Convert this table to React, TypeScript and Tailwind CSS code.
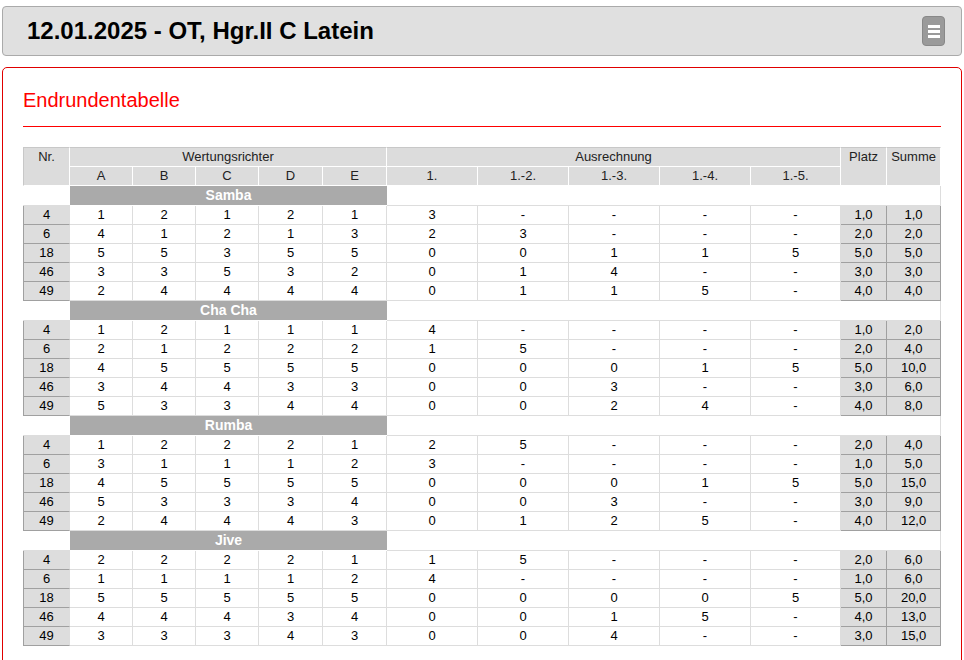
import { Fragment } from "react"

type Row = { nr: string; judges: string[]; calc: string[]; platz: string; summe: string }
type Dance = { name: string; rows: Row[] }

const r = (nr: string, j: string, c: string, platz: string, summe: string): Row => ({
  nr,
  judges: j.split(" "),
  calc: c.split(" "),
  platz,
  summe,
})

const dances: Dance[] = [
  {
    name: "Samba",
    rows: [
      r("4", "1 2 1 2 1", "3 - - - -", "1,0", "1,0"),
      r("6", "4 1 2 1 3", "2 3 - - -", "2,0", "2,0"),
      r("18", "5 5 3 5 5", "0 0 1 1 5", "5,0", "5,0"),
      r("46", "3 3 5 3 2", "0 1 4 - -", "3,0", "3,0"),
      r("49", "2 4 4 4 4", "0 1 1 5 -", "4,0", "4,0"),
    ],
  },
  {
    name: "Cha Cha",
    rows: [
      r("4", "1 2 1 1 1", "4 - - - -", "1,0", "2,0"),
      r("6", "2 1 2 2 2", "1 5 - - -", "2,0", "4,0"),
      r("18", "4 5 5 5 5", "0 0 0 1 5", "5,0", "10,0"),
      r("46", "3 4 4 3 3", "0 0 3 - -", "3,0", "6,0"),
      r("49", "5 3 3 4 4", "0 0 2 4 -", "4,0", "8,0"),
    ],
  },
  {
    name: "Rumba",
    rows: [
      r("4", "1 2 2 2 1", "2 5 - - -", "2,0", "4,0"),
      r("6", "3 1 1 1 2", "3 - - - -", "1,0", "5,0"),
      r("18", "4 5 5 5 5", "0 0 0 1 5", "5,0", "15,0"),
      r("46", "5 3 3 3 4", "0 0 3 - -", "3,0", "9,0"),
      r("49", "2 4 4 4 3", "0 1 2 5 -", "4,0", "12,0"),
    ],
  },
  {
    name: "Jive",
    rows: [
      r("4", "2 2 2 2 1", "1 5 - - -", "2,0", "6,0"),
      r("6", "1 1 1 1 2", "4 - - - -", "1,0", "6,0"),
      r("18", "5 5 5 5 5", "0 0 0 0 5", "5,0", "20,0"),
      r("46", "4 4 4 3 4", "0 0 1 5 -", "4,0", "13,0"),
      r("49", "3 3 3 4 3", "0 0 4 - -", "3,0", "15,0"),
    ],
  },
]

const judges = ["A", "B", "C", "D", "E"]
const calcs = ["1.", "1.-2.", "1.-3.", "1.-4.", "1.-5."]

// header cell base
const th = "h-[19px] p-0 bg-[#dcdcdc] font-normal text-[#222] border-r border-b border-r-white border-b-white leading-[18px]"
const td = "h-[19px] p-0 text-center border-r border-b border-[#dddddd] leading-[18px]"
const grey = "h-[19px] p-0 text-center bg-[#dddddd] leading-[18px] border-b border-b-[#a0a0a0]"

function MenuButton() {
  return (
    <button className="flex h-[30px] w-[23px] flex-col items-center justify-center gap-[2px] rounded-[4px] border border-[#888888] bg-[#9a9a9a]">
      <span className="block h-[3px] w-[12px] bg-white" />
      <span className="block h-[3px] w-[12px] bg-white" />
      <span className="block h-[3px] w-[12px] bg-white" />
    </button>
  )
}

export default function App() {
  return (
    <div className="min-h-[660px] bg-white px-[2px] pt-[6px] font-['Liberation_Sans',Arial,sans-serif]">
      <div className="flex h-[50px] items-center justify-between rounded-[4px] border border-[#aaaaaa] bg-[#e0e0e0] pl-[24px] pr-[16px]">
        <h1 className="text-[24px] font-bold text-black">12.01.2025 - OT, Hgr.II C Latein</h1>
        <MenuButton />
      </div>

      <div className="mt-[11px] rounded-t-[5px] border border-[#e00000] px-[20px] pb-[20px] pt-[20px]">
        <h2 className="h-[24px] text-[20px] leading-[24px] text-[#ff0000]">Endrundentabelle</h2>
        <div className="mt-[14px] h-px bg-[#ff0000]" />

        <table className="mt-[20px] w-[918px] table-fixed border-separate border-spacing-0 text-[13px] text-black">
          <colgroup>
            <col className="w-[47px]" />
            <col className="w-[63px]" />
            <col className="w-[63px]" />
            <col className="w-[63px]" />
            <col className="w-[64px]" />
            <col className="w-[64px]" />
            <col className="w-[91px]" />
            <col className="w-[91px]" />
            <col className="w-[91px]" />
            <col className="w-[91px]" />
            <col className="w-[90px]" />
            <col className="w-[46px]" />
            <col className="w-[54px]" />
          </colgroup>
          <thead>
            <tr>
              <th rowSpan={2} className={`${th} border-l border-t border-l-[#c8c8c8] border-t-[#c8c8c8] align-top`}>
                Nr.
              </th>
              <th colSpan={5} className={`${th} border-t border-t-[#c8c8c8]`}>
                Wertungsrichter
              </th>
              <th colSpan={5} className={`${th} border-t border-t-[#c8c8c8]`}>
                Ausrechnung
              </th>
              <th rowSpan={2} className={`${th} border-t border-t-[#c8c8c8] align-top`}>
                Platz
              </th>
              <th rowSpan={2} className={`${th} border-t border-t-[#c8c8c8] border-r-[#c8c8c8] align-top`}>
                Summe
              </th>
            </tr>
            <tr>
              {judges.map((j) => (
                <th key={j} className={th}>
                  {j}
                </th>
              ))}
              {calcs.map((c) => (
                <th key={c} className={th}>
                  {c}
                </th>
              ))}
            </tr>
          </thead>
          <tbody>
            {dances.map((d) => (
              <Fragment key={d.name}>
                <tr>
                  <td className="h-[20px] border-b border-b-[#dddddd] p-0" />
                  <td
                    colSpan={5}
                    className="h-[20px] border-b border-b-white bg-[#aaaaaa] p-0 text-center text-[14px] font-bold leading-[19px] text-white"
                  >
                    {d.name}
                  </td>
                  <td colSpan={7} className="h-[20px] border-b border-r border-[#dddddd] p-0" />
                </tr>
                {d.rows.map((row) => (
                  <tr key={d.name + row.nr}>
                    <td className={`${grey} border-l border-r border-l-[#a0a0a0] border-r-[#dddddd]`}>{row.nr}</td>
                    {row.judges.map((v, i) => (
                      <td key={"j" + i} className={td}>
                        {v}
                      </td>
                    ))}
                    {row.calc.map((v, i) => (
                      <td key={"c" + i} className={td}>
                        {v}
                      </td>
                    ))}
                    <td className={`${grey} border-r border-r-[#a0a0a0]`}>{row.platz}</td>
                    <td className={`${grey} border-r border-r-[#a0a0a0]`}>{row.summe}</td>
                  </tr>
                ))}
              </Fragment>
            ))}
          </tbody>
        </table>
      </div>
    </div>
  )
}
